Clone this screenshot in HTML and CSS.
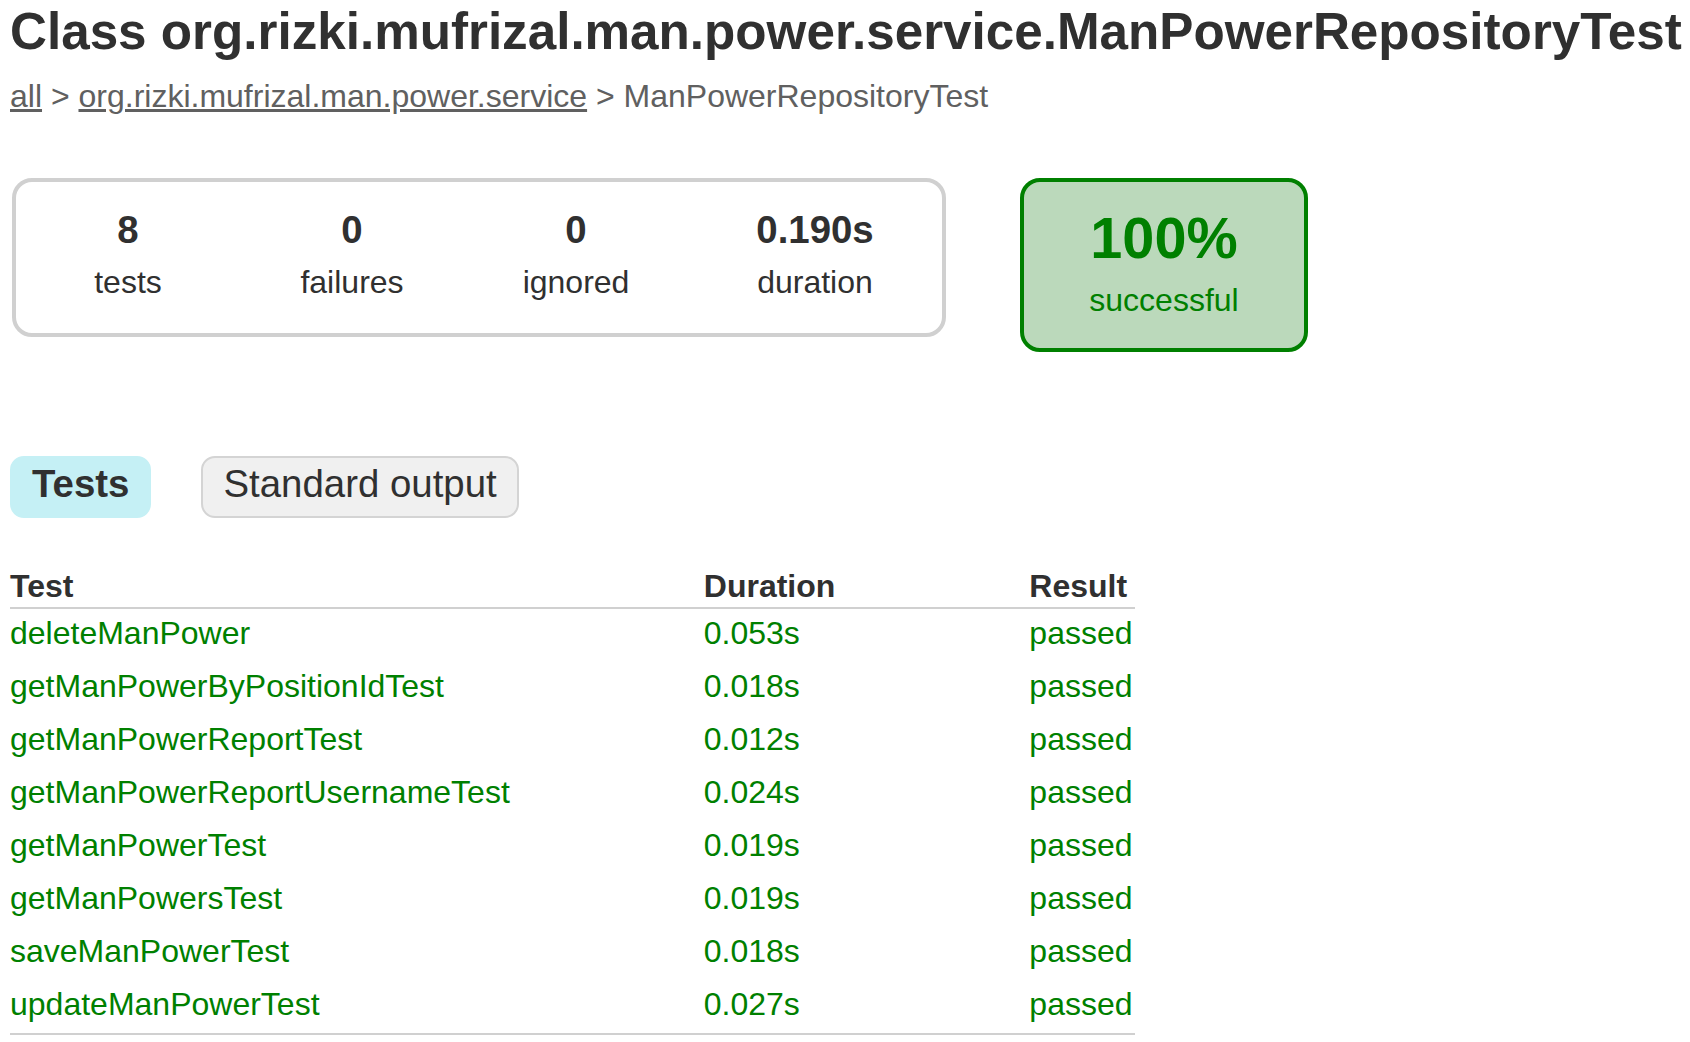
FILE: index.html
```html
<!DOCTYPE html>
<html lang="en">
<head>
<meta charset="utf-8">
<title>Test results - Class org.rizki.mufrizal.man.power.service.ManPowerRepositoryTest</title>
<link rel="stylesheet" href="styles.css">
</head>
<body>
<div class="content">
  <h1 class="title">Class org.rizki.mufrizal.man.power.service.ManPowerRepositoryTest</h1>
  <div class="breadcrumbs">
    <a href="#">all</a> &gt; <a href="#">org.rizki.mufrizal.man.power.service</a> &gt; ManPowerRepositoryTest
  </div>

  <div class="summary">
    <div class="summary-group">
      <div class="info-box">
        <div class="counter">8</div>
        <p class="label">tests</p>
      </div>
      <div class="info-box">
        <div class="counter">0</div>
        <p class="label">failures</p>
      </div>
      <div class="info-box">
        <div class="counter">0</div>
        <p class="label">ignored</p>
      </div>
      <div class="info-box info-box-wide">
        <div class="counter">0.190s</div>
        <p class="label">duration</p>
      </div>
    </div>
    <div class="success-rate">
      <div class="percent">100%</div>
      <p class="label">successful</p>
    </div>
  </div>

  <ul class="tab-links">
    <li class="tab tab-selected"><h2 class="tab-title">Tests</h2></li>
    <li class="tab"><a class="tab-link" href="#">Standard output</a></li>
  </ul>

  <table class="tests">
    <thead>
      <tr><th>Test</th><th>Duration</th><th>Result</th></tr>
    </thead>
    <tbody>
      <tr><td>deleteManPower</td><td>0.053s</td><td>passed</td></tr>
      <tr><td>getManPowerByPositionIdTest</td><td>0.018s</td><td>passed</td></tr>
      <tr><td>getManPowerReportTest</td><td>0.012s</td><td>passed</td></tr>
      <tr><td>getManPowerReportUsernameTest</td><td>0.024s</td><td>passed</td></tr>
      <tr><td>getManPowerTest</td><td>0.019s</td><td>passed</td></tr>
      <tr><td>getManPowersTest</td><td>0.019s</td><td>passed</td></tr>
      <tr><td>saveManPowerTest</td><td>0.018s</td><td>passed</td></tr>
      <tr><td>updateManPowerTest</td><td>0.027s</td><td>passed</td></tr>
    </tbody>
  </table>
</div>
</body>
</html>
```

FILE: styles.css
```css
html, body {
  margin: 0;
  padding: 0;
  background: #ffffff;
}

body {
  font-family: "Liberation Sans", Arial, Helvetica, sans-serif;
  font-size: 32px;
  line-height: 1;
  color: #303030;
}

.content {
  padding: 0 0 0 10px;
}

.title {
  margin: 6px 0 23px 0;
  font-size: 51.2px;
  font-weight: 700;
  line-height: 1;
  white-space: nowrap;
  color: #303030;
}

.breadcrumbs {
  color: #606060;
  white-space: nowrap;
}

.breadcrumbs a {
  color: #606060;
  text-decoration: underline;
}

.summary {
  display: flex;
  align-items: flex-start;
  gap: 4px;
  margin-top: 64px;
  padding: 2px;
}

.summary-group {
  display: flex;
  padding: 2px 0;
  border: 4px solid #d0d0d0;
  border-radius: 20px;
}

.info-box {
  width: 220px;
  margin: 0 2px;
  padding: 27px 0 33px 0;
  text-align: center;
}

.info-box-wide {
  width: 250px;
}

.counter {
  font-size: 38.4px;
  font-weight: 700;
  line-height: 1;
  margin-bottom: 16px;
}

.label {
  margin: 0;
  font-size: 32px;
  line-height: 1;
}

.success-rate {
  width: 280px;
  margin-left: 70px;
  padding: 28px 0 32px 0;
  text-align: center;
  color: #008000;
  background-color: #bbd9bb;
  border: 4px solid #008000;
  border-radius: 20px;
}

.percent {
  font-size: 57.6px;
  font-weight: 700;
  line-height: 1;
  margin-bottom: 16px;
}

.tab-links {
  display: flex;
  list-style: none;
  margin: 102px 0 0 0;
  padding: 0;
}

.tab {
  padding: 7px 20px 13px 20px;
  margin-right: 50px;
  border: 2px solid #d4d4d4;
  border-radius: 14px;
  background-color: #f0f0f0;
}

.tab-selected {
  background-color: #c5f0f5;
  border-color: #c5f0f5;
}

.tab-title {
  margin: 0;
  padding: 0;
  font-size: 38.4px;
  font-weight: 700;
  line-height: 1;
  white-space: nowrap;
}

.tab-link {
  display: block;
  font-size: 38.4px;
  line-height: 1;
  color: #303030;
  text-decoration: none;
  white-space: nowrap;
}

.tests {
  margin-top: 51px;
  border-collapse: collapse;
  border-bottom: 2px solid #d0d0d0;
}

.tests th {
  text-align: left;
  white-space: nowrap;
  font-weight: 700;
  line-height: 1;
  padding: 1px 2px 5px 192px;
  border-bottom: 2px solid #d0d0d0;
  color: #303030;
}

.tests td {
  white-space: nowrap;
  line-height: 33px;
  padding: 10px 2px 10px 192px;
  color: #008000;
}

.tests tbody tr:first-child td {
  padding-top: 8px;
}

.tests tbody tr:last-child td {
  padding-bottom: 12px;
}

.tests th:first-child,
.tests td:first-child {
  padding-left: 0;
}
```
